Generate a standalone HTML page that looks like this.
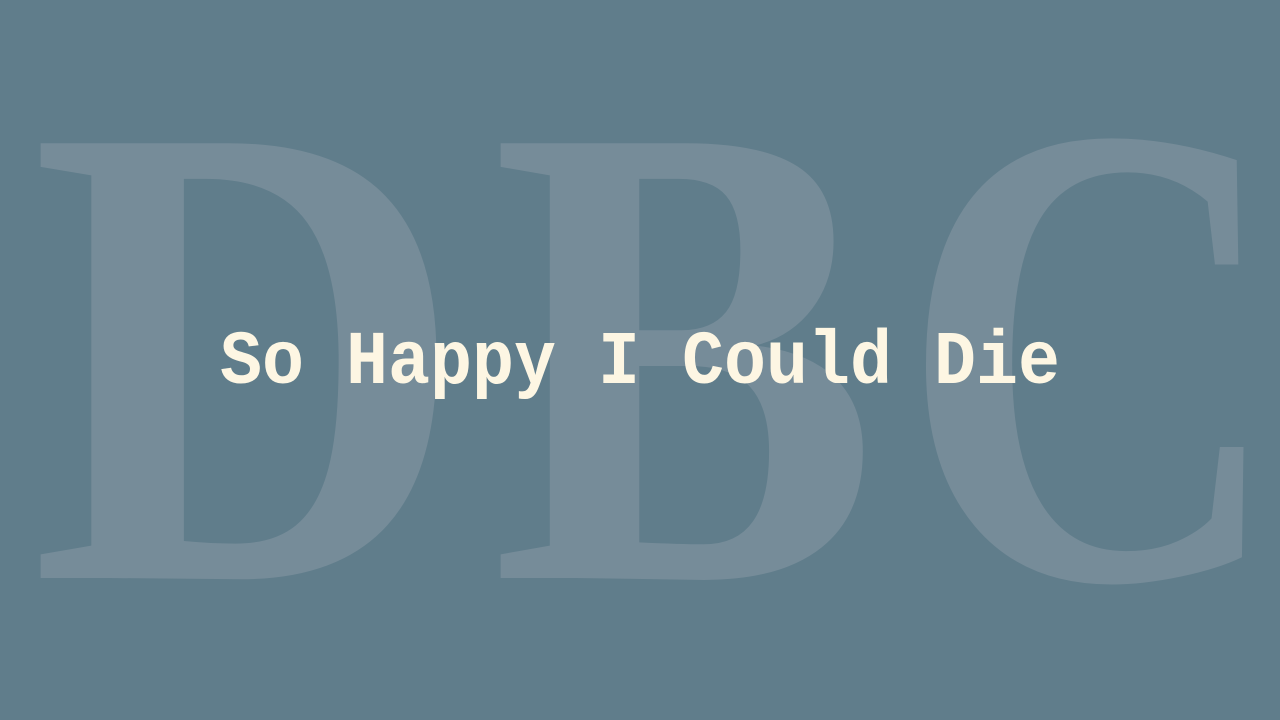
<!DOCTYPE html>
<html><head><meta charset="utf-8"><style>
html,body{margin:0;padding:0;width:1280px;height:720px;overflow:hidden;background:#607d8b}
svg{display:block}
</style></head><body>
<svg width="1280" height="720" viewBox="0 0 1280 720" xmlns="http://www.w3.org/2000/svg">
<rect width="1280" height="720" fill="#607d8b"/>
<g fill="#768c99" font-family="'Liberation Serif', serif" font-weight="bold" font-size="664">
<text x="30" y="578" textLength="436" lengthAdjust="spacingAndGlyphs">D</text>
<text x="491" y="578" textLength="388" lengthAdjust="spacingAndGlyphs">B</text>
<text x="900" y="578" textLength="384" lengthAdjust="spacingAndGlyphs">C</text>
</g>
<text x="220" y="383" textLength="840" lengthAdjust="spacingAndGlyphs" fill="#fdf6e3" font-family="'Liberation Mono', monospace" font-weight="bold" font-size="76">So Happy I Could Die</text>
</svg>
</body></html>
